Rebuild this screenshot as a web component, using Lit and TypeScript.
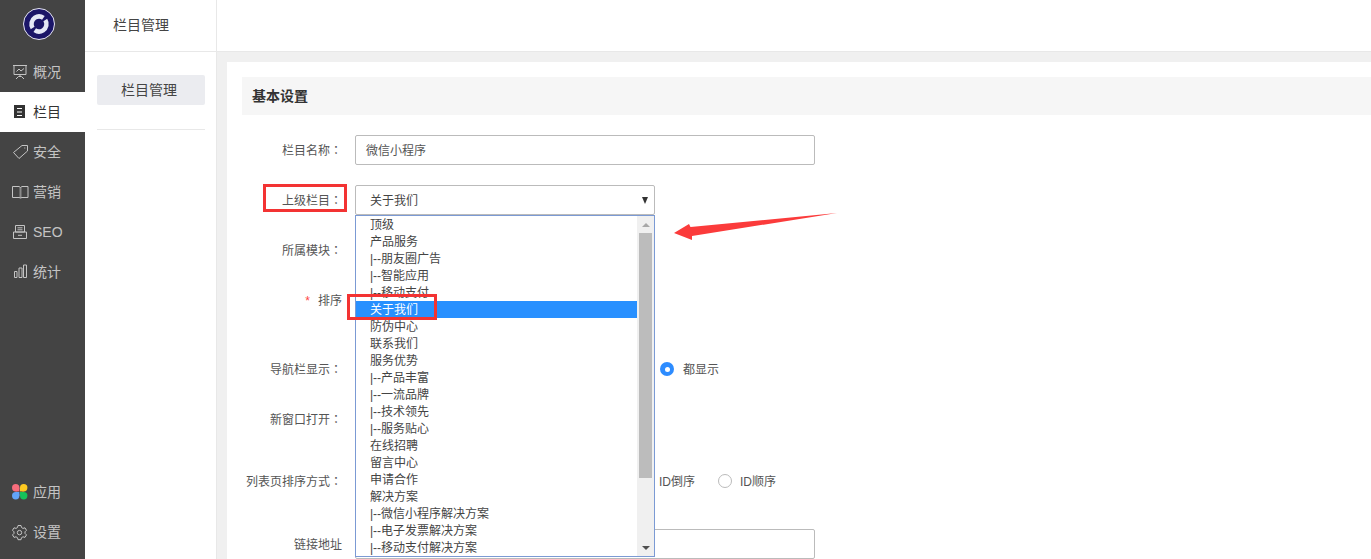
import { LitElement, html, css, svg } from "lit";
import { customElement } from "lit/decorators.js";

const icons: Record<string, unknown> = {
  overview: svg`<path d="M1 2.500h14M2 2.500v9h12v-9M4.500 8.500l2.500-2.500 2 2 3-2.500M8 11.500v2M4 16l2.500-2.500h3L12 16" fill="none" stroke="#c4c4c4"/>`,
  column: svg`<rect x="2" y="2" width="11" height="13" fill="#333"/><path d="M5 5.500h5M5 9h5M5 12.500h5" stroke="#fff" stroke-width="1.200"/>`,
  safe: svg`<path d="M1.500 9.500 10 2.500h5.500V8L7 15.500zM12.300 5h1" fill="none" stroke="#c4c4c4"/>`,
  market: svg`<path d="M.5 3.500H7l1.500 1 1.500-1h6v11h-6l-1.500.5-1.500-.5H.5z" fill="none" stroke="#c4c4c4"/><path d="M8.500 4.500V15" fill="none" stroke="#c4c4c4" stroke-width="2" opacity=".55"/>`,
  seo: svg`<path d="M3.500 2.500h9V9h-9zM1.500 9h13v6.500h-13zM5.500 4.800h5M5.500 6.800h5M6 12.300h4" fill="none" stroke="#c4c4c4"/>`,
  stats: svg`<path d="M2.500 8.500h2.500v6H2.500zM7 5h3v9.500H7zM11.500 2h3v12.500h-3z" fill="none" stroke="#c4c4c4"/>`,
  apps: svg`<circle cx="3.700" cy="4.700" r="3.700" fill="#f86d7c"/><rect x="3.700" y="4.700" width="3.700" height="3.700" fill="#f86d7c"/>
    <circle cx="11.700" cy="4.700" r="3.700" fill="#fdc921"/><rect x="8" y="4.700" width="3.700" height="3.700" fill="#fdc921"/>
    <circle cx="3.700" cy="12.700" r="3.700" fill="#62a4f8"/><rect x="3.700" y="9" width="3.700" height="3.700" fill="#62a4f8"/>
    <circle cx="11.700" cy="12.700" r="3.700" fill="#16c25a"/><rect x="8" y="9" width="3.700" height="3.700" fill="#16c25a"/>`,
  settings: svg`<path d="M6 2.500h3l.5 2 1.500.9 2-.6 1.500 2.500-1.500 1.500v1.600l1.500 1.500-1.500 2.500-2-.6-1.500.9-.5 2H6l-.5-2-1.500-.9-2 .6L.5 11.900 2 10.400V8.800L.5 7.300 2 4.800l2 .6 1.500-.9z" fill="none" stroke="#c4c4c4"/><circle cx="7.500" cy="9.600" r="2.200" fill="none" stroke="#c4c4c4"/>`,
};

const NAV_TOP = [
  ["overview", "概况"],
  ["column", "栏目"],
  ["safe", "安全"],
  ["market", "营销"],
  ["seo", "SEO"],
  ["stats", "统计"],
];
const NAV_BOTTOM = [
  ["apps", "应用"],
  ["settings", "设置"],
];

const OPTIONS = [
  "顶级", "产品服务", "|--朋友圈广告", "|--智能应用", "|--移动支付", "关于我们", "防伪中心", "联系我们",
  "服务优势", "|--产品丰富", "|--一流品牌", "|--技术领先", "|--服务贴心", "在线招聘", "留言中心", "申请合作",
  "解决方案", "|--微信小程序解决方案", "|--电子发票解决方案", "|--移动支付解决方案",
];

@customElement("app-root")
export class AppRoot extends LitElement {
  static styles = css`
    :host {
      display: block;
      width: 1371px;
      height: 559px;
      overflow: hidden;
      position: relative;
      font-family: "Liberation Sans", "Noto Sans CJK SC", sans-serif;
      font-size: 12px;
      color: #333;
      background: #fff;
    }
    .shell { display: flex; height: 559px; }
    .side {
      width: 85px;
      flex: none;
      background: #444;
      display: flex;
      flex-direction: column;
      color: #c4c4c4;
      font-size: 14px;
    }
    .logo { height: 52px; display: flex; justify-content: center; padding: 8px 7px 0 0; box-sizing: border-box; }
    .logo svg { display: block; }
    .nav { display: flex; flex-direction: column; }
    .spacer { flex: 1; }
    .bottom { padding-bottom: 7px; }
    .item { height: 40px; display: flex; align-items: center; padding-left: 12px; gap: 4px; }
    .item svg { flex: none; width: 17px; height: 18px; display: block; }
    .item span { padding-bottom: 2px; }
    .item.latin span { padding-bottom: 0; }
    .item.on { background: #fff; color: #333; }
    .sub { width: 132px; flex: none; border-right: 1px solid #e8e8e8; box-sizing: border-box; display: flex; flex-direction: column; font-size: 14px; }
    .sub-head {
      height: 52px;
      border-bottom: 1px solid #e8e8e8;
      display: flex;
      align-items: center;
      padding: 0 0 4px 28px;
      box-sizing: border-box;
      color: #444;
    }
    .sub-body { padding: 23px 11px 0 12px; }
    .sub-btn {
      height: 30px;
      line-height: 30px;
      padding-right: 4px;
      box-sizing: border-box;
      text-align: center;
      background: #ebecf0;
      border-radius: 2px;
      color: #444;
    }
    .sub-line { border-bottom: 1px solid #e8e8e8; height: 24px; }
    .main { flex: 1; display: flex; flex-direction: column; min-width: 0; }
    .top { height: 52px; flex: none; border-bottom: 1px solid #e8e8e8; box-sizing: border-box; }
    .content { flex: 1; background: #f0f0f0; padding: 10px 0 0 10px; min-height: 0; }
    .card { background: #fff; height: 100%; padding: 15px 0 0 15px; box-sizing: border-box; }
    .title {
      height: 38px;
      background: #f6f6f6;
      display: flex;
      align-items: center;
      padding: 0 0 2px 10px;
      box-sizing: border-box;
      font-size: 14px;
      font-weight: bold;
      color: #333;
      margin-bottom: 20px;
    }
    .row { height: 30px; display: flex; align-items: center; }
    .g20 { margin-top: 20px; }
    .g39 { margin-top: 39px; }
    .g32 { margin-top: 32px; }
    .g33 { margin-top: 33px; }
    .label { width: 100px; flex: none; text-align: right; font-size: 12px; color: #555; white-space: nowrap; padding-bottom: 2px; }
    .label b { color: #f44; font-weight: normal; margin-right: 8px; }
    .colon { font-family: "Noto Sans CJK TC", sans-serif; }
    .input {
      margin-left: 13px;
      width: 460px;
      height: 30px;
      box-sizing: border-box;
      border: 1px solid #bbb;
      border-radius: 2px;
      line-height: 30px;
      padding-left: 10px;
      color: #555;
      background: #fff;
      font-size: 12px;
    }
    .select { width: 300px; padding-left: 14px; position: relative; color: #444; }
    .caret {
      position: absolute;
      right: 6px;
      top: 11px;
      width: 0;
      height: 0;
      border: 3.500px solid transparent;
      border-top: 7px solid #333;
      border-bottom: 0;
    }
    .radios { display: flex; align-items: center; color: #555; }
    .radios span { padding-bottom: 2px; }
    .radio {
      width: 14px;
      height: 14px;
      border: 1px solid #bbb;
      border-radius: 50%;
      box-sizing: border-box;
      flex: none;
    }
    .radio.on { border: 0; background: #2d8cff; display: flex; align-items: center; justify-content: center; }
    .radio.on::after { content: ""; width: 5px; height: 5px; border-radius: 50%; background: #fff; }
    .show { margin-left: 318px; gap: 9px; }
    .sort { margin-left: 317px; }
    .sort .radio { margin: 0 8px 0 23px; }
    .drop {
      position: absolute;
      left: 355px;
      top: 215px;
      width: 300px;
      height: 342px;
      box-sizing: border-box;
      border: 1px solid #7b9ad4;
      background: #fff;
      display: flex;
      color: #444;
      overflow: hidden;
      font-size: 12px;
    }
    .list { flex: 1; min-width: 0; }
    .opt { height: 17px; line-height: 19px; padding-left: 14px; white-space: nowrap; }
    .opt.sel { background: #2890ff; color: #fff; }
    .bar { width: 17px; flex: none; background: #f0f0f0; display: flex; flex-direction: column; align-items: center; }
    .up, .down { height: 17px; flex: none; display: flex; align-items: center; justify-content: center; }
    .up::after { content: ""; border: 4px solid transparent; border-bottom: 4px solid #a8a8a8; border-top: 0; }
    .down::after { content: ""; border: 4px solid transparent; border-top: 4px solid #505050; border-bottom: 0; }
    .thumb { width: 13px; height: 245px; background: #bcbcbc; flex: none; }
    .bar .gap { flex: 1; }
    .mark { position: absolute; border: 3px solid #f33333; box-sizing: border-box; pointer-events: none; }
    .m1 { left: 263px; top: 184px; width: 84px; height: 28px; }
    .m2 { left: 347px; top: 294px; width: 90px; height: 26px; }
    .arrow { position: absolute; left: 670px; top: 208px; width: 170px; height: 36px; }
  `;

  private navItem(key: string, label: string) {
    return html`<div class="item ${key === "column" ? "on" : ""} ${key === "seo" ? "latin" : ""}">
      <svg viewBox="0 0 17 18">${icons[key]}</svg><span>${label}</span>
    </div>`;
  }

  private label(text: string) {
    return html`<div class="label">${text}<span class="colon">：</span></div>`;
  }

  render() {
    return html`
      <div class="shell">
        <aside class="side">
          <div class="logo">
            <svg width="32" height="32" viewBox="0 0 32 32">
              <circle cx="16" cy="16" r="15.500" fill="#1b1668" stroke="#e6e6f0" stroke-width="1"/>
              <circle cx="16" cy="16" r="7.500" fill="none" stroke="#e4e8f6" stroke-width="4.500"
                stroke-dasharray="20.500 3.060" transform="rotate(-33 16 16)"/>
            </svg>
          </div>
          <div class="nav">${NAV_TOP.map(([k, l]) => this.navItem(k, l))}</div>
          <div class="spacer"></div>
          <div class="nav bottom">${NAV_BOTTOM.map(([k, l]) => this.navItem(k, l))}</div>
        </aside>
        <section class="sub">
          <div class="sub-head">栏目管理</div>
          <div class="sub-body">
            <div class="sub-btn">栏目管理</div>
            <div class="sub-line"></div>
          </div>
        </section>
        <section class="main">
          <div class="top"></div>
          <div class="content">
            <div class="card">
              <div class="title">基本设置</div>
              <div class="row">${this.label("栏目名称")}<div class="input">微信小程序</div></div>
              <div class="row g20">${this.label("上级栏目")}<div class="input select">关于我们<i class="caret"></i></div></div>
              <div class="row g20">${this.label("所属模块")}</div>
              <div class="row g20"><div class="label"><b>*</b>排序</div></div>
              <div class="row g39">${this.label("导航栏显示")}<div class="radios show"><i class="radio on"></i><span>都显示</span></div></div>
              <div class="row g20">${this.label("新窗口打开")}</div>
              <div class="row g32">${this.label("列表页排序方式")}<div class="radios sort"><span>ID倒序</span><i class="radio"></i><span>ID顺序</span></div></div>
              <div class="row g33"><div class="label">链接地址</div><div class="input"></div></div>
            </div>
          </div>
        </section>
      </div>
      <div class="drop">
        <div class="list">
          ${OPTIONS.map((o) => html`<div class="opt ${o === "关于我们" ? "sel" : ""}">${o}</div>`)}
        </div>
        <div class="bar">
          <div class="up"></div>
          <div class="thumb"></div>
          <div class="gap"></div>
          <div class="down"></div>
        </div>
      </div>
      <div class="mark m1"></div>
      <div class="mark m2"></div>
      <svg class="arrow" viewBox="0 0 170 36">
        <path d="M4 25 L19 16 L20.500 19 L167 5 L22 28 L22 32 Z" fill="#fb3b3b"/>
      </svg>
    `;
  }
}
